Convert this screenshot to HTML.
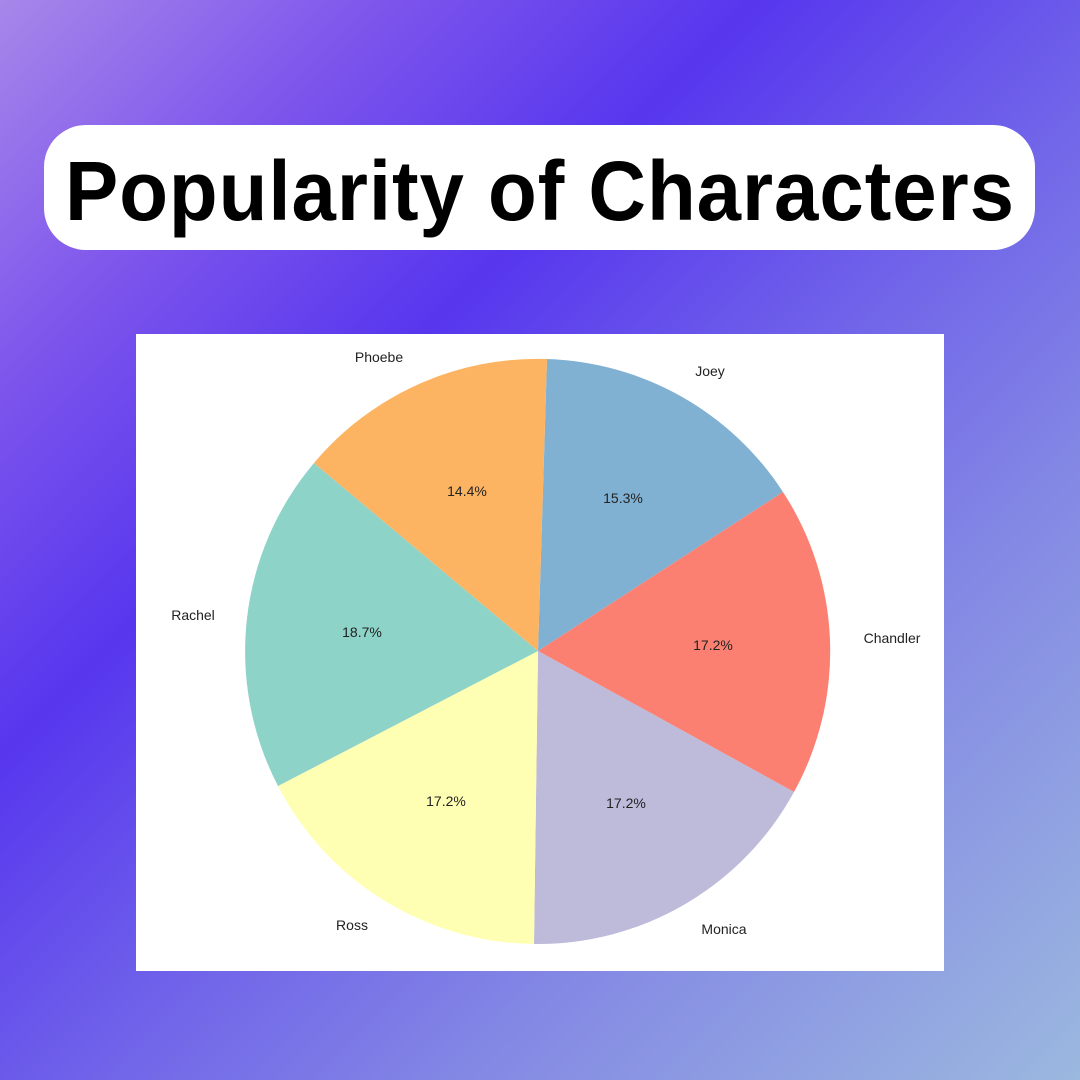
<!DOCTYPE html>
<html><head><meta charset="utf-8"><style>
html,body{margin:0;padding:0}
body{width:1080px;height:1080px;overflow:hidden;position:relative;
background:linear-gradient(135deg,#a887ea 0%,#7d55ec 18%,#5736ee 35%,#6e5fea 52%,#8489e4 72%,#9bb8df 100%);
font-family:"Liberation Sans",sans-serif}
.title{position:absolute;left:44px;top:125px;width:991px;height:125px;background:#fff;border-radius:42px}
.title span{position:absolute;left:21px;top:18px;font-weight:bold;font-size:84px;color:#000;white-space:nowrap;transform-origin:0 0;letter-spacing:1px}
.chart{position:absolute;left:136px;top:334px;width:808px;height:637px;background:#fff}
</style></head><body>
<div class="title"><span id="t">Popularity of Characters</span></div>
<div class="chart">
<svg width="808" height="637" viewBox="136 334 808 637" xmlns="http://www.w3.org/2000/svg" font-family="Liberation Sans, sans-serif" font-size="14" fill="#222">
<path d="M538 651 L547 359 A292 292 0 0 1 783 492 Z" fill="#80b1d3"/>
<path d="M538 651 L783 492 A292 292 0 0 1 794 792 Z" fill="#fb8072"/>
<path d="M538 651 L794 792 A292 292 0 0 1 534 944 Z" fill="#bebada"/>
<path d="M538 651 L534 944 A292 292 0 0 1 278 786 Z" fill="#ffffb3"/>
<path d="M538 651 L278 786 A292 292 0 0 1 314 463 Z" fill="#8dd3c7"/>
<path d="M538 651 L314 463 A292 292 0 0 1 547 359 Z" fill="#fdb462"/>
<g text-anchor="middle">
<text x="623" y="503">15.3%</text>
<text x="467" y="496">14.4%</text>
<text x="362" y="637">18.7%</text>
<text x="713" y="650">17.2%</text>
<text x="446" y="806">17.2%</text>
<text x="626" y="808">17.2%</text>
<text x="379" y="362">Phoebe</text>
<text x="710" y="376">Joey</text>
<text x="193" y="620">Rachel</text>
<text x="892" y="643">Chandler</text>
<text x="352" y="930">Ross</text>
<text x="724" y="934">Monica</text>
</g>
</svg>
</div>
<script>
var t=document.getElementById('t');var w=t.getBoundingClientRect().width;t.style.transform='scaleX('+(950/w)+')';
</script>
</body></html>
